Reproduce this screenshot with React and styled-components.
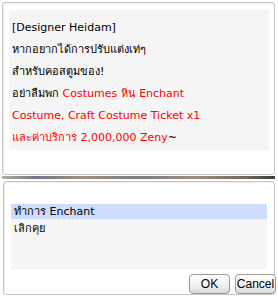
import React from "react";
import styled, { createGlobalStyle } from "styled-components";

const Global = createGlobalStyle`
  body {
    margin: 0;
    background: #ffffff;
    font-family: Tahoma, "DejaVu Sans", "Noto Sans", sans-serif;
  }
`;

const Page = styled.div`
  width: 278px;
  height: 298px;
  display: flex;
  flex-direction: column;
  padding: 2px 3px 0 2px;
  box-sizing: border-box;
`;

const Panel = styled.div`
  box-sizing: border-box;
  height: ${(p) => p.h}px;
  margin-left: ${(p) => p.ml || 0}px;
  border: 1px solid #c6c6c6;
  border-radius: 3px;
  box-shadow: inset 1px 1px 0 #eeeeee;
  background: #ffffff;
  display: flex;
  flex-direction: column;
  padding: ${(p) => p.pad};
`;

const MessageBox = styled.div`
  background: #f5f5f5;
  height: 140px;
  padding: 7px 0 0 3px;
  box-sizing: border-box;
  font-size: 11px;
  line-height: 22px;
  color: #000;
`;

const Red = styled.span`
  color: #ff0000;
`;

const Divider = styled.div`
  height: 3px;
  margin: 1px 0 2px 0;
  background: linear-gradient(
    90deg,
    #b8aea0 0%,
    #6f7788 12%,
    #a09280 30%,
    #7a7a84 50%,
    #9c8e80 70%,
    #6e665c 90%,
    #3e3a36 100%
  );
`;

const List = styled.div`
  background: #f5f5f5;
  height: 65px;
  font-size: 11px;
`;

const Item = styled.div`
  height: 15px;
  line-height: 15px;
  padding-left: 3px;
  margin-bottom: 2px;
  background: ${(p) => (p.active ? "#cddcfa" : "transparent")};
`;

const Buttons = styled.div`
  display: flex;
  justify-content: flex-end;
  gap: 5px;
  margin-top: 5px;
  margin-right: -9px;
`;

const Btn = styled.button`
  width: 41px;
  height: 20px;
  padding: 0;
  border: 1px solid #9a9a9a;
  border-radius: 4px;
  background: linear-gradient(#ffffff, #f0f0f0 60%, #d8d8d8);
  font-family: "Liberation Sans", Arial, sans-serif;
  font-size: 12px;
  color: #000;
`;

export default function App() {
  return (
    <>
      <Global />
      <Page>
        <Panel h={173} pad="7px 5px 0 6px">
          <MessageBox>
            <div>[Designer Heidam]</div>
            <div>หากอยากได้การปรับแต่งเท่ๆ</div>
            <div>สำหรับคอสตูมของ!</div>
            <div>
              อย่าลืมพก <Red>Costumes หิน Enchant</Red>
            </div>
            <div>
              <Red>Costume, Craft Costume Ticket x1</Red>
            </div>
            <div>
              <Red>และค่าบริการ 2,000,000 Zeny</Red>~
            </div>
          </MessageBox>
        </Panel>
        <Divider />
        <Panel h={114} ml={1} pad="22px 7px 0 7px">
          <List>
            <Item active>ทำการ Enchant</Item>
            <Item>เลิกคุย</Item>
          </List>
          <Buttons>
            <Btn>OK</Btn>
            <Btn>Cancel</Btn>
          </Buttons>
        </Panel>
      </Page>
    </>
  );
}
